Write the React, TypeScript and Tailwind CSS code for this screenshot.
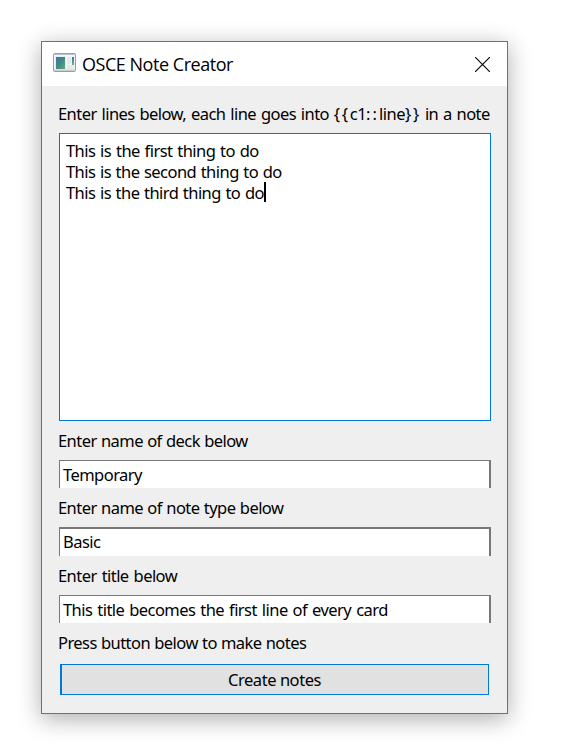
import { useState } from "react";

const labelText = "-ml-px whitespace-pre text-[16.5px] leading-[21px] tracking-[-0.55px]";

function WindowIcon() {
  return (
    <svg width="23" height="19" viewBox="0 0 23 19" className="-mt-[3px] shrink-0">
      <defs>
        <linearGradient id="pane" x1="0" y1="0" x2="1" y2="1">
          <stop offset="0" stopColor="#4377a0" />
          <stop offset="0.5" stopColor="#3f8a86" />
          <stop offset="1" stopColor="#62ad74" />
        </linearGradient>
        <linearGradient id="side" x1="0" y1="0" x2="0" y2="1">
          <stop offset="0" stopColor="#3f6fa5" />
          <stop offset="1" stopColor="#6bb487" />
        </linearGradient>
      </defs>
      <rect x="0.5" y="0.5" width="22" height="18" rx="1" fill="#f4f5f6" stroke="#979da6" />
      <rect x="1" y="1" width="21" height="1" fill="#b9c3d0" />
      <rect x="1" y="16.5" width="21" height="1.5" fill="#c9cdd2" />
      <rect x="2.5" y="3.5" width="10" height="13" fill="#d9e3e2" />
      <rect x="3" y="4" width="9" height="12" fill="url(#pane)" />
      <rect x="14" y="4" width="4" height="7" fill="#e8e9ea" />
      <rect x="14" y="12" width="7" height="4" fill="#e8e9ea" />
      <rect x="19" y="4" width="2" height="8" fill="url(#side)" />
    </svg>
  );
}

export default function App() {
  const [deck, setDeck] = useState("Temporary");
  const [noteType, setNoteType] = useState("Basic");
  const [title, setTitle] = useState("This title becomes the first line of every card");
  const field =
    "block w-[432px] border-l border-r-2 border-[#787878] bg-white pl-[3px] text-[16.5px] leading-[21px] tracking-[-0.55px] text-black outline-none";

  return (
    <div className="h-[755px] w-[562px] overflow-hidden bg-white pl-[41px] pt-[41px] font-['Noto_Sans',sans-serif] text-black">
      <div className="flex h-[673px] w-[467px] flex-col border border-[#707070] bg-[#efefef] shadow-[0_5px_22px_rgba(0,0,0,0.32)]">
        <header className="flex h-11 shrink-0 items-center bg-white pl-[11px] pr-[17px]">
          <WindowIcon />
          <h1 className="ml-[6px] grow whitespace-pre font-['Open_Sans',sans-serif] text-[18px] leading-6 tracking-[-0.47px]">
            OSCE Note Creator
          </h1>
          <button aria-label="Close">
            <svg width="15" height="15" viewBox="0 0 15 15" stroke="black" strokeWidth="1.1">
              <path d="M0 0 15 15M15 0 0 15" />
            </svg>
          </button>
        </header>
        <main className="flex flex-col pl-[17px]">
          <label className={`${labelText} mt-[17px] [word-spacing:1.05px]`}>
            Enter lines below, each line goes into{" "}
            <span className="tracking-[1.7px]">{"{{"}</span>c1
            <span className="tracking-[2.1px]">::</span>line
            <span className="tracking-[1.7px]">{"}}"}</span>
            <span className="-ml-[0.8px]"> in a note</span>
          </label>
          <div className="mt-[9px] h-[288px] w-[432px] border border-[#0078d7] bg-white pl-[6px] pt-[6px] text-[16.5px] leading-[21px] tracking-[-0.55px] [word-spacing:0.85px]">
            <p className="[word-spacing:1.05px]">This is the first thing to do</p>
            <p>This is the second thing to do</p>
            <p className="flex">
              This is the third thing to do
              <span className="h-5 w-[2px] bg-black" />
            </p>
          </div>
          <label className={`${labelText} mt-[9px] [word-spacing:0.5px]`}>Enter name of deck below</label>
          <input className={`${field} mt-[9px] h-7 border-t`} value={deck} onChange={(e) => setDeck(e.target.value)} />
          <label className={`${labelText} mt-[9px] [word-spacing:0.6px]`}>Enter name of note type below</label>
          <input className={`${field} mt-[9px] h-[29px] border-t-2 pb-[2px]`} value={noteType} onChange={(e) => setNoteType(e.target.value)} />
          <label className={`${labelText} mt-[9px] [word-spacing:1.2px]`}>Enter title below</label>
          <input className={`${field} mt-[9px] h-7 border-t [word-spacing:1.2px]`} value={title} onChange={(e) => setTitle(e.target.value)} />
          <label className={`${labelText} mt-[9px] [word-spacing:0.4px]`}>Press button below to make notes</label>
          <button className="ml-px mt-[11px] h-[31px] w-[429px] border border-l-2 border-[#0078d7] bg-[#e1e1e1] pr-px text-[16.5px] leading-[21px] tracking-[-0.45px]">
            Create notes
          </button>
        </main>
      </div>
    </div>
  );
}
